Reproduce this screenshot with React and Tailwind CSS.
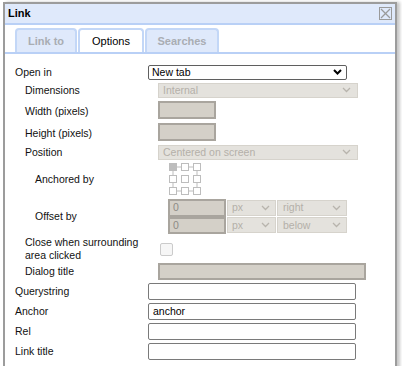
const Chevron = ({ bold }) => (
    <svg width="9" height="6" viewBox="0 0 9 6" className="shrink-0">
        <polyline
            points="1,1 4.5,4.5 8,1"
            fill="none"
            stroke={bold ? '#000' : '#b8b4ad'}
            strokeWidth={bold ? 2 : 1.3}
        />
    </svg>
);

const DisabledSelect = ({ text, w }) => (
    <div className={`${w} h-[15px] flex items-center justify-between pl-[4px] pr-[6px] bg-[#e4e2dd] border border-[#d6d3cc] text-[#b4b0a9]`}>
        <span>{text}</span>
        <Chevron />
    </div>
);

const TextBox = ({ value }) => (
    <div className="w-[208px] h-[17px] flex items-center pl-[4px] bg-white border border-[#7a7a7a] rounded-[2px] text-black">
        {value}
    </div>
);

const AnchorGrid = () => {
    const pos = [0.5, 12.5, 24.5];
    return (
        <svg width="32" height="32" viewBox="0 0 32 32">
            {/* connectors round the frame */}
            <g stroke="#bdbdbd" strokeWidth="1">
                <line x1="7.5" y1="4" x2="12.5" y2="4" />
                <line x1="19.5" y1="4" x2="24.5" y2="4" />
                <line x1="7.5" y1="28" x2="12.5" y2="28" />
                <line x1="19.5" y1="28" x2="24.5" y2="28" />
                <line x1="4" y1="7.5" x2="4" y2="12.5" />
                <line x1="4" y1="19.5" x2="4" y2="24.5" />
                <line x1="28" y1="7.5" x2="28" y2="12.5" />
                <line x1="28" y1="19.5" x2="28" y2="24.5" />
            </g>
            {pos.map((y, r) =>
                pos.map((x, c) => (
                    <rect
                        key={`${r}-${c}`}
                        x={x}
                        y={y}
                        width="7"
                        height="7"
                        fill={r === 0 && c === 0 ? '#bdbdbd' : '#fff'}
                        stroke="#bdbdbd"
                        strokeWidth="1"
                    />
                ))
            )}
        </svg>
    );
};

const tabs = [
    { label: 'Link to', w: 'w-[62px]', active: false },
    { label: 'Options', w: 'w-[66px]', active: true },
    { label: 'Searches', w: 'w-[74px]', active: false },
];

export default function App() {
    return (
        <div className="min-h-screen bg-white pt-[2px] pl-[3px] font-['Liberation_Sans',Arial,sans-serif] text-[10.5px] leading-[13px] text-[#111]">
            <div className="w-[394px] h-[370px] border-2 border-b-0 border-[#9c9c9c] bg-white shadow-[3px_0_3px_rgba(0,0,0,0.22)]">
                {/* title bar */}
                <div className="h-[21px] flex items-center justify-between pl-[3px] pr-[3px] bg-[#dfe9fb] border-b-2 border-[#b9d0f6]">
                    <span className="font-bold text-[11px] text-black">Link</span>
                    <svg width="13" height="13" viewBox="0 0 13 13">
                        <rect x="0.5" y="0.5" width="12" height="12" fill="none" stroke="#9a9a9a" />
                        <line x1="2" y1="2" x2="11" y2="11" stroke="#9a9a9a" strokeWidth="1.2" />
                        <line x1="11" y1="2" x2="2" y2="11" stroke="#9a9a9a" strokeWidth="1.2" />
                    </svg>
                </div>

                {/* tabs */}
                <div className="flex gap-[1px] pl-[10px] pt-[3px] border-b-2 border-[#b9d0f6]">
                    {tabs.map(t => (
                        <div
                            key={t.label}
                            className={`${t.w} h-[24px] flex items-center justify-center rounded-t-[4px] border-2 border-b-0 border-[#c3d7f7] text-[11px] ${t.active ? 'bg-white text-black' : 'bg-[#dfe9fb] text-[#a9adb3] font-bold'}`}
                        >
                            {t.label}
                        </div>
                    ))}
                </div>

                {/* form */}
                <div className="pt-[9px] pl-[10px]">
                    <div className="h-[18px] flex items-center">
                        <div className="w-[133px]">Open in</div>
                        <div className="w-[199px] h-[15px] flex items-center justify-between pl-[3px] pr-[4px] bg-white border border-[#5f5f5f] rounded-[2px] text-black">
                            <span>New tab</span>
                            <Chevron bold />
                        </div>
                    </div>

                    <div className="pl-[10px]">
                        <div className="h-[18px] flex items-center">
                            <div className="w-[133px]">Dimensions</div>
                            <DisabledSelect text="Internal" w="w-[200px]" />
                        </div>
                        <div className="h-[22px] flex items-center">
                            <div className="w-[133px] pt-[3px]">Width (pixels)</div>
                            <div className="w-[58px] h-[18px] bg-[#d4d0c8] border-2 border-[#a9a59e]" />
                        </div>
                        <div className="h-[22px] flex items-center">
                            <div className="w-[133px] pt-[2px]">Height (pixels)</div>
                            <div className="w-[58px] h-[18px] bg-[#d4d0c8] border-2 border-[#a9a59e]" />
                        </div>
                        <div className="h-[18px] flex items-center">
                            <div className="w-[133px]">Position</div>
                            <DisabledSelect text="Centered on screen" w="w-[200px]" />
                        </div>

                        <div className="pl-[10px]">
                            <div className="h-[36px] flex items-center">
                                <div className="w-[133px]">Anchored by</div>
                                <div className="pl-[1px]">
                                    <AnchorGrid />
                                </div>
                            </div>
                            <div className="h-[39px] flex items-center">
                                <div className="w-[133px]">Offset by</div>
                                <div className="flex flex-col">
                                    {['right', 'below'].map(dir => (
                                        <div key={dir} className="h-[17.5px] flex items-center">
                                            <div className="w-[58px] h-[17.5px] flex items-center pl-[3px] bg-[#d4d0c8] border-2 border-[#a9a59e] text-[#8e8b86]">
                                                0
                                            </div>
                                            <div className="w-[49px] h-[16px] ml-[1px] flex items-center justify-between pl-[4px] pr-[5px] bg-[#e4e2dd] border border-[#d6d3cc] text-[#b4b0a9]">
                                                <span>px</span>
                                                <Chevron />
                                            </div>
                                            <div className="w-[70px] h-[16px] ml-[1px] flex items-center justify-between pl-[5px] pr-[5px] bg-[#e4e2dd] border border-[#d6d3cc] text-[#b4b0a9]">
                                                <span>{dir}</span>
                                                <Chevron />
                                            </div>
                                        </div>
                                    ))}
                                </div>
                            </div>
                        </div>

                        <div className="h-[26px] flex items-center">
                            <div className="w-[133px] pr-[6px]">Close when surrounding area clicked</div>
                            <div className="ml-[2px] w-[13px] h-[13px] rounded-[2px] border border-[#cbcbcb] bg-[#f6f6f6]" />
                        </div>
                        <div className="h-[19px] flex items-center">
                            <div className="w-[133px]">Dialog title</div>
                            <div className="w-[208px] h-[17px] bg-[#d4d0c8] border-2 border-[#a9a59e]" />
                        </div>
                    </div>

                    {['Querystring', 'Anchor', 'Rel', 'Link title'].map(label => (
                        <div key={label} className="h-[20px] flex items-center">
                            <div className="w-[133px]">{label}</div>
                            <TextBox value={label === 'Anchor' ? 'anchor' : ''} />
                        </div>
                    ))}
                </div>
            </div>
        </div>
    );
}
